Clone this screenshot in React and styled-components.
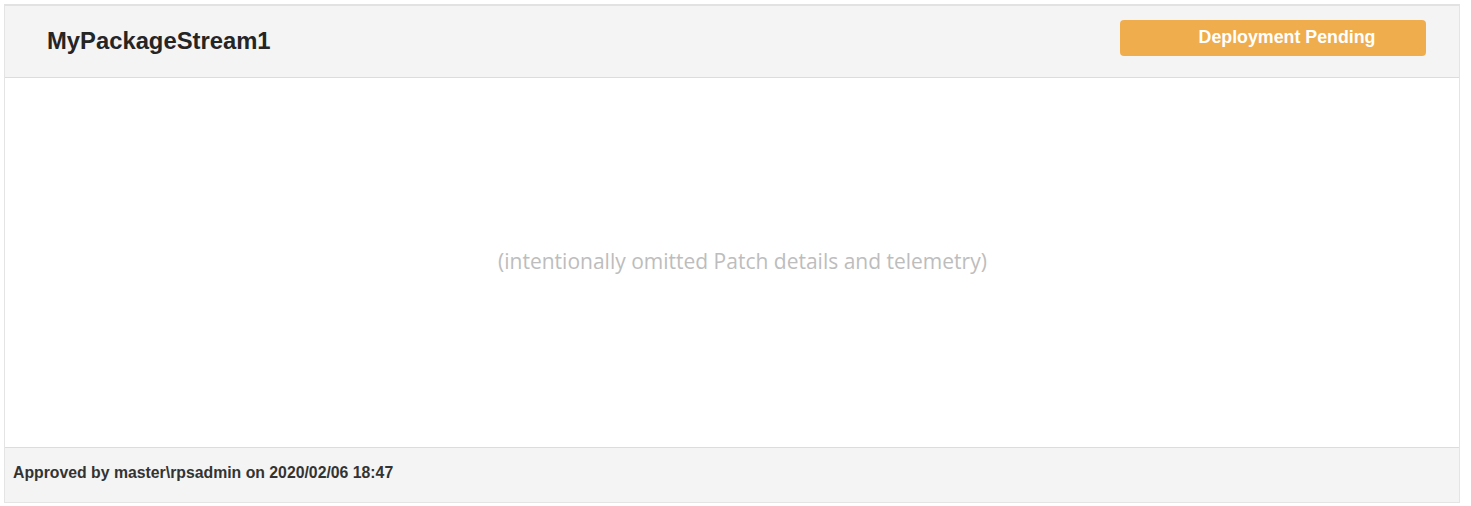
import styled, { createGlobalStyle } from "styled-components";

const GlobalStyle = createGlobalStyle`
  body {
    margin: 0;
    background: #ffffff;
    font-family: "Liberation Sans", Arial, sans-serif;
  }
`;

const Panel = styled.div`
  margin: 4px 0 0 4px;
  width: 1454px;
  border: 1px solid #e4e4e4;
  border-top: 2px solid #e2e2e2;
  display: flex;
  flex-direction: column;
`;

const Header = styled.div`
  height: 71px;
  background: #f4f4f4;
  border-bottom: 1px solid #dcdcdc;
  display: flex;
  align-items: center;
  justify-content: space-between;
  padding: 0 33px 0 42px;
`;

const Title = styled.h2`
  margin: 0;
  font-size: 23.8px;
  font-weight: bold;
  color: #252525;
  margin-top: -2px;
`;

const StatusBadge = styled.div`
  width: 306px;
  height: 36px;
  box-sizing: border-box;
  margin-top: -8px;
  border-radius: 4px;
  background: ${(props) => props.color};
  color: #ffffff;
  font-size: 17.8px;
  font-weight: bold;
  display: flex;
  align-items: center;
  justify-content: center;
  padding-left: 28px;
`;

const Body = styled.div`
  height: 369px;
  background: #ffffff;
  display: flex;
  align-items: center;
  justify-content: center;
`;

const Placeholder = styled.span`
  font-family: "Open Sans", "Liberation Sans", sans-serif;
  font-size: 21px;
  color: #bdbdbd;
  margin: -3px 0 0 21px;
`;

const Footer = styled.div`
  height: 54px;
  background: #f4f4f4;
  border-top: 1px solid #dcdcdc;
  display: flex;
  align-items: center;
  padding-left: 8px;
`;

const FooterText = styled.span`
  font-size: 15.8px;
  font-weight: bold;
  color: #333333;
  margin-top: -4px;
`;

const App = () => {
  return (
    <>
      <GlobalStyle />
      <Panel>
        <Header>
          <Title>MyPackageStream1</Title>
          <StatusBadge color="#f0ad4e">Deployment Pending</StatusBadge>
        </Header>
        <Body>
          <Placeholder>(intentionally omitted Patch details and telemetry)</Placeholder>
        </Body>
        <Footer>
          <FooterText>Approved by master\rpsadmin on 2020/02/06 18:47</FooterText>
        </Footer>
      </Panel>
    </>
  );
};

export default App;
